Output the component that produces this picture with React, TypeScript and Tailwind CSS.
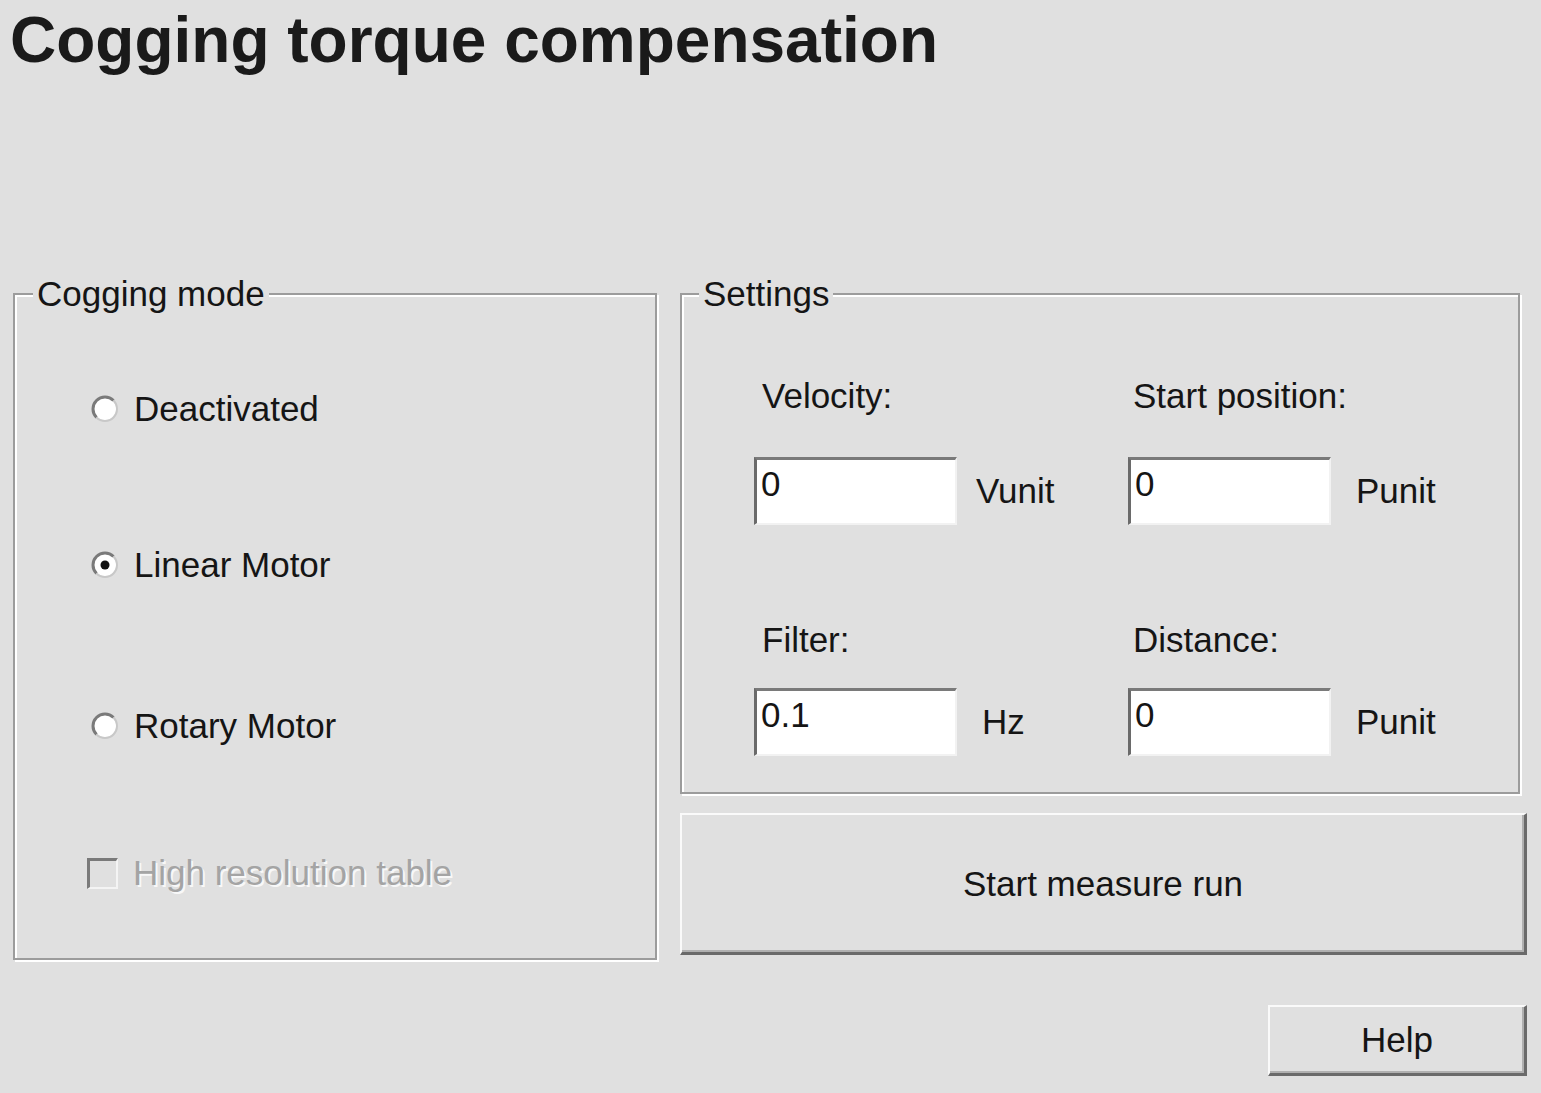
const font = { fontFamily: '"Liberation Sans", Arial, sans-serif' };

function Radio({ checked }: { checked?: boolean }) {
  return (
    <svg width="28" height="28" viewBox="0 0 28 28" className="shrink-0">
      <circle cx="14" cy="14" r="11" fill="#ffffff" />
      <path d="M5.51 22.49 A12 12 0 0 1 22.49 5.51" fill="none" stroke="#7a7a7a" strokeWidth="3" />
      <path d="M22.49 5.51 A12 12 0 0 1 5.51 22.49" fill="none" stroke="#c8c8c8" strokeWidth="2" />
      {checked && <circle cx="14" cy="14" r="4.5" fill="#111111" />}
    </svg>
  );
}

function RadioRow({ label, checked, className }: { label: string; checked?: boolean; className: string }) {
  return (
    <label className={`flex h-[40px] items-center gap-[15px] pl-[76px] ${className}`}>
      <Radio checked={checked} />
      <span className="text-[35px] leading-[40px] text-[#151515]">{label}</span>
    </label>
  );
}

function Field({ value, unit, unitGap }: { value: string; unit: string; unitGap: string }) {
  return (
    <div className="flex h-[68px] items-center">
      <input
        readOnly
        defaultValue={value}
        className="h-[68px] w-[203px] border-t-[3px] border-l-[3px] border-r-2 border-b-2 border-t-[#7a7a7a] border-l-[#6a6a6a] border-r-[#f2f2f2] border-b-[#f2f2f2] bg-white pl-[4px] pt-[4px] pb-[19px] text-[35px] leading-[40px] text-[#151515] outline-none"
        style={font}
      />
      <span className={`text-[35px] leading-[40px] text-[#151515] ${unitGap}`}>{unit}</span>
    </div>
  );
}

function Labeled({
  label,
  labelGap,
  value,
  unit,
  unitGap,
  top,
}: {
  label: string;
  labelGap: string;
  value: string;
  unit: string;
  unitGap: string;
  top: string;
}) {
  return (
    <div className={top}>
      <div className={`h-[40px] text-[35px] leading-[40px] text-[#151515] ${labelGap}`}>{label}</div>
      <div className={top === "mt-[62px]" ? "mt-[41px]" : "mt-[28px]"}>
        <Field value={value} unit={unit} unitGap={unitGap} />
      </div>
    </div>
  );
}

export default function App() {
  return (
    <div className="h-[1093px] w-[1541px] overflow-hidden bg-[#e0e0e0] text-[#151515]" style={font}>
      <h1 className="pl-[10px] pt-[8px] text-[64px] font-bold leading-none text-[#1a1a1a]">
        Cogging torque compensation
      </h1>

      <div className="mt-[202px] flex gap-[23px] pl-[13px]">
        {/* left group */}
        <fieldset className="h-[686px] w-[644px] border-2 border-[#9c9c9c] p-0 shadow-[inset_2px_2px_0_#ffffff,2px_2px_0_#ffffff]">
          <legend className="ml-[18px] h-[40px] bg-[#e0e0e0] px-[4px] text-[35px] leading-[40px] text-[#151515]">
            Cogging mode
          </legend>
          <RadioRow label="Deactivated" className="mt-[75px]" />
          <RadioRow label="Linear Motor" checked className="mt-[116px]" />
          <RadioRow label="Rotary Motor" className="mt-[121px]" />
          <label className="mt-[107px] flex h-[40px] items-center gap-[15px] pl-[72px]">
            <span className="h-[31px] w-[31px] shrink-0 border-t-[3px] border-l-[3px] border-r-2 border-b-2 border-t-[#7a7a7a] border-l-[#7a7a7a] border-r-[#f4f4f4] border-b-[#f4f4f4] bg-[#e0e0e0]" />
            <span className="text-[35px] leading-[40px] text-[#a4a4a4] [text-shadow:2px_2px_0_#f8f8f8]">
              High resolution table
            </span>
          </label>
        </fieldset>

        {/* right column */}
        <div className="flex w-[847px] flex-col">
          <fieldset className="h-[520px] w-[840px] border-2 border-[#9c9c9c] p-0 shadow-[inset_2px_2px_0_#ffffff,2px_2px_0_#ffffff]">
            <legend className="ml-[17px] h-[40px] bg-[#e0e0e0] px-[4px] text-[35px] leading-[40px] text-[#151515]">
              Settings
            </legend>
            <div className="flex pl-[72px]">
              <div className="w-[374px]">
                <Labeled label="Velocity:" labelGap="pl-[8px]" value="0" unit="Vunit" unitGap="ml-[19px]" top="mt-[62px]" />
                <Labeled label="Filter:" labelGap="pl-[8px]" value="0.1" unit="Hz" unitGap="ml-[25px]" top="mt-[95px]" />
              </div>
              <div>
                <Labeled label="Start position:" labelGap="pl-[5px]" value="0" unit="Punit" unitGap="ml-[25px]" top="mt-[62px]" />
                <Labeled label="Distance:" labelGap="pl-[5px]" value="0" unit="Punit" unitGap="ml-[25px]" top="mt-[95px]" />
              </div>
            </div>
          </fieldset>

          <button
            type="button"
            className="mt-[19px] h-[142px] w-[847px] border-t-2 border-l-2 border-r-[3px] border-b-[3px] border-t-[#fafafa] border-l-[#fafafa] border-r-[#6a6a6a] border-b-[#6a6a6a] bg-[#e0e0e0] text-[35px] leading-[40px] text-[#151515] shadow-[inset_-2px_-2px_0_#b0b0b0]"
          >
            Start measure run
          </button>

          <button
            type="button"
            className="mt-[50px] h-[71px] w-[259px] self-end border-t-2 border-l-2 border-r-[3px] border-b-[3px] border-t-[#fafafa] border-l-[#fafafa] border-r-[#6a6a6a] border-b-[#6a6a6a] bg-[#e0e0e0] text-[35px] leading-[40px] text-[#151515] shadow-[inset_-2px_-2px_0_#b0b0b0]"
          >
            Help
          </button>
        </div>
      </div>
    </div>
  );
}
